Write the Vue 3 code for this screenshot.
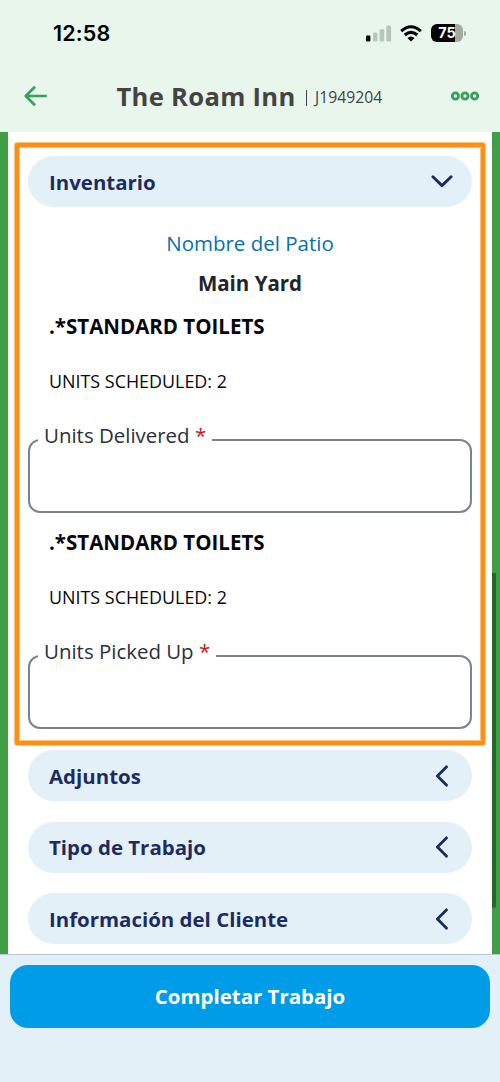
<script setup>
const fields = [
  { item: '.*STANDARD TOILETS', scheduled: 'UNITS SCHEDULED: 2', label: 'Units Delivered', cls: 'delivered' },
  { item: '.*STANDARD TOILETS', scheduled: 'UNITS SCHEDULED: 2', label: 'Units Picked Up', cls: 'picked' },
]
const sections = [
  { title: 'Adjuntos', cls: 's-adj' },
  { title: 'Tipo de Trabajo', cls: 's-tipo' },
  { title: 'Información del Cliente', cls: 's-info' },
]
</script>

<template>
  <div class="app">
    <header class="top">
      <div class="status">
        <span class="time">12:58</span>
        <div class="indicators">
          <svg class="signal" width="26" height="17" viewBox="0 0 26 17">
            <rect x="0" y="10.5" width="4.4" height="6" rx="1.2" fill="#000" />
            <rect x="7" y="7.4" width="4.4" height="9.1" rx="1.2" fill="#b9c6be" />
            <rect x="13.6" y="4.3" width="4.6" height="12.2" rx="1.2" fill="#b9c6be" />
            <rect x="20.3" y="0.5" width="4.8" height="16" rx="1.2" fill="#b9c6be" />
          </svg>
          <svg class="wifi" width="22" height="17" viewBox="0 0 22 17">
            <g fill="none" stroke="#000" stroke-width="3.1">
              <path d="M1.2 6.1Q11-2.6 20.8 6.1" />
              <path d="M4.8 10Q11 4.7 17.2 10" />
            </g>
            <path d="M7.4 13Q11 10 14.6 13L11 16.6Z" fill="#000" />
          </svg>
          <div class="battery"><span>75</span></div>
          <i class="nub"></i>
        </div>
      </div>
      <div class="bar">
        <svg class="back" width="24" height="22" viewBox="0 0 24 22">
          <path d="M11 1.8L1.8 11L11 20.2M2 11H22.8" fill="none" stroke="#36a05c" stroke-width="2.7" stroke-linejoin="round" />
        </svg>
        <div class="heading"><h1>The Roam Inn</h1><i class="sep"></i><span class="job">J1949204</span></div>
        <svg class="more" width="30" height="10" viewBox="0 0 30 10">
          <g fill="none" stroke="#36a05c" stroke-width="2.8">
            <circle cx="5.4" cy="5" r="3.1" /><circle cx="15" cy="5" r="3.1" /><circle cx="24.6" cy="5" r="3.1" />
          </g>
        </svg>
      </div>
    </header>

    <main class="body">
      <div class="panel">
        <section class="highlight">
          <div class="pill s-inv">
            <span>Inventario</span>
            <svg width="22" height="13" viewBox="0 0 22 13"><path d="M1.9 1.8L11 10.6L20.1 1.8" fill="none" stroke="#1c2c61" stroke-width="2.9" stroke-linecap="round" stroke-linejoin="round" /></svg>
          </div>
          <p class="yard-label">Nombre del Patio</p>
          <p class="yard">Main Yard</p>
          <div v-for="f in fields" :key="f.label" class="group">
            <p class="item">{{ f.item }}</p>
            <p class="scheduled">{{ f.scheduled }}</p>
            <fieldset :class="f.cls">
              <legend>{{ f.label }} <b>*</b></legend>
            </fieldset>
          </div>
        </section>
        <div class="sections">
          <div v-for="s in sections" :key="s.title" class="pill" :class="s.cls">
            <span>{{ s.title }}</span>
            <svg width="22" height="22" viewBox="0 0 22 22"><path d="M15.4 1.9L6.4 11L15.4 20.1" fill="none" stroke="#1c2c61" stroke-width="2.9" stroke-linecap="round" stroke-linejoin="round" /></svg>
          </div>
        </div>
      </div>
      <i class="thumb"></i>
    </main>

    <footer class="foot"><button>Completar Trabajo</button></footer>
  </div>
</template>

<style>
body { margin: 0; }
</style>

<style scoped>
* { box-sizing: border-box; }
p, h1 { margin: 0; white-space: nowrap; }
.app { width: 500px; height: 1082px; overflow: hidden; font-family: "Open Sans", sans-serif; display: flex; flex-direction: column; background: #e4f0f8; }
.top { height: 132px; flex: none; background: #e9f6ec; }
.status { height: 66px; padding: 0 34px 0 53px; display: flex; align-items: center; justify-content: space-between; }
.time { font: 600 21.5px/26px Inter, sans-serif; letter-spacing: 0.15px; color: #000; }
.indicators { display: flex; align-items: center; height: 18px; }
.wifi { margin-left: 8px; }
.battery { margin-left: 9px; width: 32px; height: 18px; border-radius: 6px; background: linear-gradient(90deg, #000 24px, #a1aba4 24px); color: #fff; text-align: center; font: 700 14.5px/18.5px Inter, sans-serif; }
.nub { width: 2px; height: 5px; margin-left: 1px; border-radius: 0 2px 2px 0; background: #a1aba4; }
.bar { height: 60px; display: flex; align-items: center; padding: 0 20px 0 24px; }
.heading { flex: 1; display: flex; align-items: center; padding: 2px 0 0 68.5px; }
h1 { font-size: 25.6px; line-height: 36px; font-weight: 700; color: #444; letter-spacing: 0.3px; }
.sep { width: 1px; height: 16px; margin: 1px 8px 0 10.5px; background: #444; }
.job { font-size: 15.75px; line-height: 36px; color: #444; }
.body { height: 822px; flex: none; padding: 0 8px; background: #409e44; position: relative; }
.panel { height: 822px; background: #fff; padding: 11px 7px 0; overflow: hidden; }
.thumb { position: absolute; right: 4px; top: 441px; width: 4px; height: 335px; background: #29662e; border-radius: 0 0 2px 2px; }
.highlight { height: 602px; width: 470px; border: 4px solid #fb9014; border-radius: 2px; box-shadow: 0 0 0 1px #fcc07a, inset 0 0 0 1px #fcc07a; padding: 9px 9px 0; }
.pill { height: 51px; border-radius: 26px; background: #e4f0f8; display: flex; align-items: center; justify-content: space-between; padding: 0 19px 0 21px; color: #1c2c61; font-size: 20.45px; line-height: 30px; font-weight: 700; white-space: nowrap; }
.s-inv span { padding-top: 1px; }
.yard-label { margin-top: 21px; text-align: center; font-size: 20.5px; line-height: 30px; color: #0571b1; }
.yard { margin-top: 10px; text-align: center; font-size: 20.5px; line-height: 30px; font-weight: 700; color: #20242c; }
.item { padding-left: 21px; padding-top: 13px; font-size: 20.5px; line-height: 30px; font-weight: 700; color: #05070f; }
.scheduled { padding-left: 21px; margin-top: 27px; font-size: 17.9px; line-height: 26px; color: #05070f; }
fieldset { margin: 27px 0 1px; height: 92px; min-width: 0; padding: 0 0 0 8px; border: 2px solid #7c858f; border-radius: 12px; }
legend { padding: 0 6px 10px 6px; font-size: 20.45px; line-height: 28px; color: #2a2f3a; white-space: nowrap; }
legend b { font-weight: 400; color: #c4161c; }
.sections { padding: 5px 13px 0; display: flex; flex-direction: column; gap: 20.5px; }
.foot { flex: 1; border-top: 1px solid #bac7cf; background: #e4f0f8; padding: 9.5px 10px 0; }
button { display: block; width: 480px; height: 63.5px; border: 0; border-radius: 18px; background: #009ce8; color: #fff; font: 700 20.45px/30px "Open Sans", sans-serif; padding: 0; }
</style>
